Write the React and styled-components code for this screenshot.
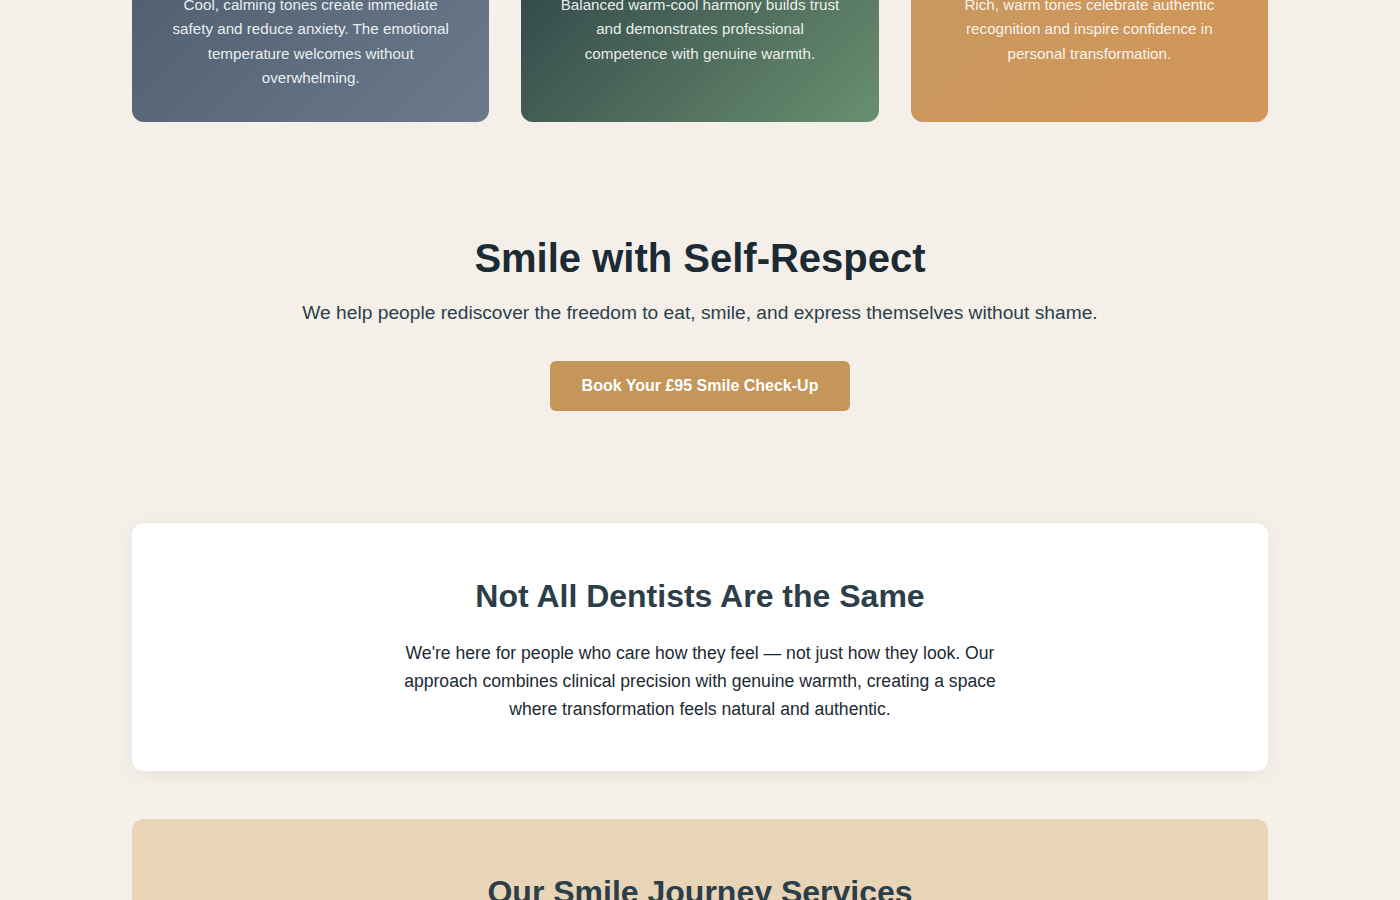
import React from "react";
import styled, { createGlobalStyle } from "styled-components";

const GlobalStyle = createGlobalStyle`
  * { box-sizing: border-box; }
  body {
    margin: 0;
    background: #f4f0e9;
    font-family: "Liberation Sans", Arial, sans-serif;
    color: #1c2a33;
  }
`;

const TONES = [
  {
    key: "cool",
    gradient: "linear-gradient(135deg, #4e5e6f 0%, #6c7b8b 100%)",
    text: "Cool, calming tones create immediate safety and reduce anxiety. The emotional temperature welcomes without overwhelming.",
  },
  {
    key: "balanced",
    gradient: "linear-gradient(135deg, #2f4548 0%, #6a8f6f 100%)",
    text: "Balanced warm-cool harmony builds trust and demonstrates professional competence with genuine warmth.",
  },
  {
    key: "warm",
    gradient: "linear-gradient(135deg, #c6985e 0%, #d4965a 100%)",
    text: "Rich, warm tones celebrate authentic recognition and inspire confidence in personal transformation.",
  },
];

const App = () => {
  return (
    <>
      <GlobalStyle />
      <Page>
        <ToneGrid>
          {TONES.map(tone => (
            <ToneCard key={tone.key} $bg={tone.gradient}>
              <ToneText>{tone.text}</ToneText>
            </ToneCard>
          ))}
        </ToneGrid>

        <Hero>
          <HeroTitle>Smile with Self-Respect</HeroTitle>
          <HeroLead>
            We help people rediscover the freedom to eat, smile, and express themselves without shame.
          </HeroLead>
          <CtaButton>Book Your £95 Smile Check-Up</CtaButton>
        </Hero>

        <Panel $tone="white">
          <PanelTitle>Not All Dentists Are the Same</PanelTitle>
          <PanelText>
            We're here for people who care how they feel — not just how they look. Our approach
            combines clinical precision with genuine warmth, creating a space where transformation
            feels natural and authentic.
          </PanelText>
        </Panel>

        <Panel $tone="sand">
          <PanelTitle>Our Smile Journey Services</PanelTitle>
        </Panel>
      </Page>
    </>
  );
};

const Page = styled.main`
  width: 1136px;
  margin: 0 auto;
  display: flex;
  flex-direction: column;
`;

const ToneGrid = styled.section`
  display: grid;
  grid-template-columns: repeat(3, 1fr);
  gap: 32px;
  margin-top: -47px;
`;

const ToneCard = styled.article`
  background: ${props => props.$bg};
  border-radius: 12px;
  padding: 40px 38px 32px;
  text-align: center;
`;

const ToneText = styled.p`
  margin: 0;
  font-size: 15.2px;
  line-height: 1.6;
  color: rgba(255, 255, 255, 0.9);
`;

const Hero = styled.section`
  padding: 112px 0;
  display: flex;
  flex-direction: column;
  align-items: center;
  text-align: center;
`;

const HeroTitle = styled.h2`
  margin: 0 0 16px;
  font-size: 40px;
  line-height: 48px;
  font-weight: 700;
  color: #1c2a33;
`;

const HeroLead = styled.p`
  margin: 0 0 32px;
  font-size: 19.2px;
  line-height: 1.6;
  color: #2c3e4a;
`;

const CtaButton = styled.button`
  border: none;
  border-radius: 6px;
  background: #c4965a;
  color: #ffffff;
  font-family: inherit;
  font-size: 16px;
  font-weight: 700;
  line-height: 20px;
  padding: 15px 32px;
  cursor: pointer;
`;

const Panel = styled.section`
  background: ${props => (props.$tone === "sand" ? "#e8d4b6" : "#ffffff")};
  border-radius: 12px;
  padding: 54px 48px 48px;
  margin-bottom: 48px;
  text-align: center;
  box-shadow: ${props =>
    props.$tone === "white" ? "0 4px 20px rgba(0, 0, 0, 0.05)" : "none"};
`;

const PanelTitle = styled.h2`
  margin: 0 0 24px;
  font-size: 32px;
  line-height: 38px;
  font-weight: 700;
  color: #2c3e48;
`;

const PanelText = styled.p`
  max-width: 600px;
  margin: 0 auto;
  font-size: 17.6px;
  line-height: 1.6;
  color: #1c2a33;
`;

export default App;
